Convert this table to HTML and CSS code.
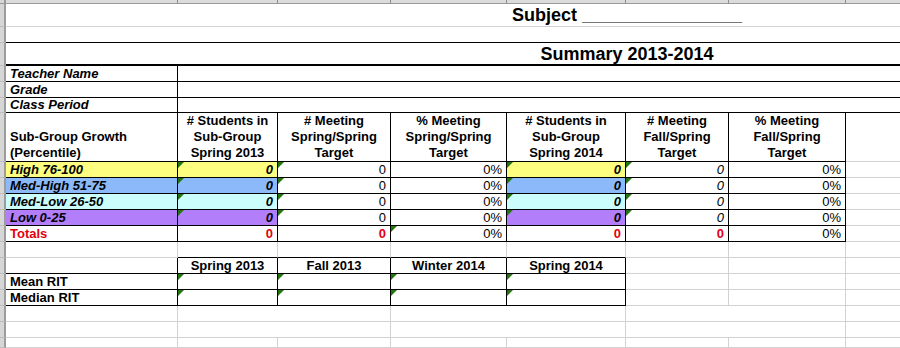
FILE: index.html
```html
<!DOCTYPE html>
<html>
<head>
<meta charset="utf-8">
<link rel="stylesheet" href="styles.css">
</head>
<body>
<div class="sheet">
  <!-- column header strip -->
  <div class="corner"></div>
  <div class="ch"></div><div class="ch"></div><div class="ch"></div><div class="ch"></div>
  <div class="ch"></div><div class="ch"></div><div class="ch"></div><div class="ch last"></div>

  <!-- row 1 -->
  <div class="rh"></div>
  <div class="c s8 nr title">Subject ________________</div>
  <!-- row 2 -->
  <div class="rh"></div>
  <div class="c s8 nr bb"></div>
  <!-- row 3 -->
  <div class="rh"></div>
  <div class="c s8 nr bb2 title">Summary 2013-2014</div>

  <!-- info rows -->
  <div class="rh"></div>
  <div class="c br bb i">Teacher Name</div>
  <div class="c s7 nr bb"></div>
  <div class="rh"></div>
  <div class="c br bb i">Grade</div>
  <div class="c s7 nr bb"></div>
  <div class="rh"></div>
  <div class="c br bb i">Class Period</div>
  <div class="c s7 nr bb"></div>

  <!-- header row -->
  <div class="rh"></div>
  <div class="c br bb hd">Sub-Group Growth<br>(Percentile)</div>
  <div class="c br bb hd ctr"># Students in<br>Sub-Group<br>Spring 2013</div>
  <div class="c br bb hd ctr"># Meeting<br>Spring/Spring<br>Target</div>
  <div class="c br bb hd ctr">% Meeting<br>Spring/Spring<br>Target</div>
  <div class="c br bb hd ctr"># Students in<br>Sub-Group<br>Spring 2014</div>
  <div class="c br bb hd ctr"># Meeting<br>Fall/Spring<br>Target</div>
  <div class="c br bb hd ctr">% Meeting<br>Fall/Spring<br>Target</div>
  <div class="c nr"></div>

  <!-- High -->
  <div class="rh"></div>
  <div class="c br bb i yellow">High 76-100</div>
  <div class="c br bb i r yellow tri">0</div>
  <div class="c br bb n r tri">0</div>
  <div class="c br bb n r">0%</div>
  <div class="c br bb i r yellow tri">0</div>
  <div class="c br bb n i r tri">0</div>
  <div class="c br bb n r">0%</div>
  <div class="c nr"></div>

  <!-- Med-High -->
  <div class="rh"></div>
  <div class="c br bb i blue">Med-High 51-75</div>
  <div class="c br bb i r blue tri">0</div>
  <div class="c br bb n r tri">0</div>
  <div class="c br bb n r">0%</div>
  <div class="c br bb i r blue tri">0</div>
  <div class="c br bb n i r tri">0</div>
  <div class="c br bb n r">0%</div>
  <div class="c nr"></div>

  <!-- Med-Low -->
  <div class="rh"></div>
  <div class="c br bb i cyan">Med-Low 26-50</div>
  <div class="c br bb i r cyan tri">0</div>
  <div class="c br bb n r tri">0</div>
  <div class="c br bb n r">0%</div>
  <div class="c br bb i r cyan tri">0</div>
  <div class="c br bb n i r tri">0</div>
  <div class="c br bb n r">0%</div>
  <div class="c nr"></div>

  <!-- Low -->
  <div class="rh"></div>
  <div class="c br bb i purple">Low 0-25</div>
  <div class="c br bb i r purple tri">0</div>
  <div class="c br bb n r tri">0</div>
  <div class="c br bb n r">0%</div>
  <div class="c br bb i r purple tri">0</div>
  <div class="c br bb n i r tri">0</div>
  <div class="c br bb n r">0%</div>
  <div class="c nr"></div>

  <!-- Totals -->
  <div class="rh"></div>
  <div class="c br bb red">Totals</div>
  <div class="c br bb r red">0</div>
  <div class="c br bb r red">0</div>
  <div class="c br bb n r tri">0%</div>
  <div class="c br bb r red">0</div>
  <div class="c br bb r red">0</div>
  <div class="c br bb n r">0%</div>
  <div class="c nr"></div>

  <!-- empty row -->
  <div class="rh"></div>
  <div class="c"></div>
  <div class="c bb"></div>
  <div class="c bb"></div>
  <div class="c bb"></div>
  <div class="c bb"></div>
  <div class="c"></div>
  <div class="c"></div>
  <div class="c nr"></div>

  <!-- RIT header -->
  <div class="rh"></div>
  <div class="c br bb"></div>
  <div class="c br bb ctr">Spring 2013</div>
  <div class="c br bb ctr">Fall 2013</div>
  <div class="c br bb ctr">Winter 2014</div>
  <div class="c br bb ctr">Spring 2014</div>
  <div class="c"></div>
  <div class="c"></div>
  <div class="c nr"></div>

  <!-- Mean RIT -->
  <div class="rh"></div>
  <div class="c br bb">Mean RIT</div>
  <div class="c br bb tri"></div>
  <div class="c br bb tri"></div>
  <div class="c br bb tri"></div>
  <div class="c br bb tri"></div>
  <div class="c"></div>
  <div class="c"></div>
  <div class="c nr"></div>

  <!-- Median RIT -->
  <div class="rh"></div>
  <div class="c br bb">Median RIT</div>
  <div class="c br bb tri"></div>
  <div class="c br bb tri"></div>
  <div class="c br bb tri"></div>
  <div class="c br bb tri"></div>
  <div class="c"></div>
  <div class="c"></div>
  <div class="c nr"></div>

  <!-- merged empty rows -->
  <div class="rh"></div>
  <div class="c"></div>
  <div class="c s2"></div>
  <div class="c s2"></div>
  <div class="c s2"></div>
  <div class="c nr"></div>

  <div class="rh"></div>
  <div class="c"></div>
  <div class="c s2"></div>
  <div class="c s2"></div>
  <div class="c s2"></div>
  <div class="c nr"></div>

  <!-- partial last row -->
  <div class="rh"></div>
  <div class="c"></div>
  <div class="c"></div>
  <div class="c"></div>
  <div class="c"></div>
  <div class="c"></div>
  <div class="c"></div>
  <div class="c"></div>
  <div class="c nr"></div>
</div>
</body>
</html>
```

FILE: styles.css
```css
html, body {
  margin: 0;
  padding: 0;
  background: #ffffff;
}

body {
  width: 900px;
  height: 348px;
  overflow: hidden;
  font-family: "Liberation Sans", Arial, sans-serif;
  color: #000;
}

.sheet {
  display: grid;
  grid-template-columns: 6px 172px 100px 113px 116px 119px 103px 117px 54px;
  grid-template-rows:
    4px 23px 16px 23px 16px 16px 15px 49px
    16px 16px 16px 16px 16px
    16px 16px 16px 16px 16px 16px 10px;
  width: 900px;
}

.corner {
  background: #d6d6d6;
  border-bottom: 1px solid #9a9a9a;
  border-right: 2px solid #9a9a9a;
}

.ch {
  background: #dcdcdc;
  border-bottom: 1px solid #9a9a9a;
  border-right: 1px solid #8e8e8e;
}

.ch.last {
  border-right: none;
}

.rh {
  background: #d6d6d6;
  border-right: 2px solid #9c9c9c;
  border-bottom: 1px solid #bdbdbd;
}

.c {
  position: relative;
  display: flex;
  align-items: flex-end;
  padding: 0 4px;
  border-right: 1px solid #d2d2d2;
  border-bottom: 1px solid #d2d2d2;
  font-size: 13px;
  font-weight: bold;
  line-height: 15px;
  white-space: nowrap;
  overflow: hidden;
}

.s2 { grid-column: span 2; }
.s7 { grid-column: span 7; }
.s8 { grid-column: span 8; }

.nr { border-right: none; }
.br { border-right-color: #000; }
.bb { border-bottom-color: #000; }
.bb2 { border-bottom: 2px solid #000; }

.title {
  justify-content: center;
  align-items: center;
  padding-left: 352px;
  font-size: 18px;
  line-height: 20px;
}

.hd {
  line-height: 16px;
  padding-bottom: 0;
}

.ctr {
  justify-content: center;
  text-align: center;
}

.r {
  justify-content: flex-end;
}

.i { font-style: italic; }
.n { font-weight: normal; }
.red { color: #e3000f; }

.yellow { background: #fdfd80; }
.blue { background: #8bb9f9; }
.cyan { background: #ccfdfd; }
.purple { background: #b37ef9; }

.tri::before {
  content: "";
  position: absolute;
  left: 0;
  top: 0;
  border-top: 6px solid #23760f;
  border-right: 6px solid transparent;
}
```
